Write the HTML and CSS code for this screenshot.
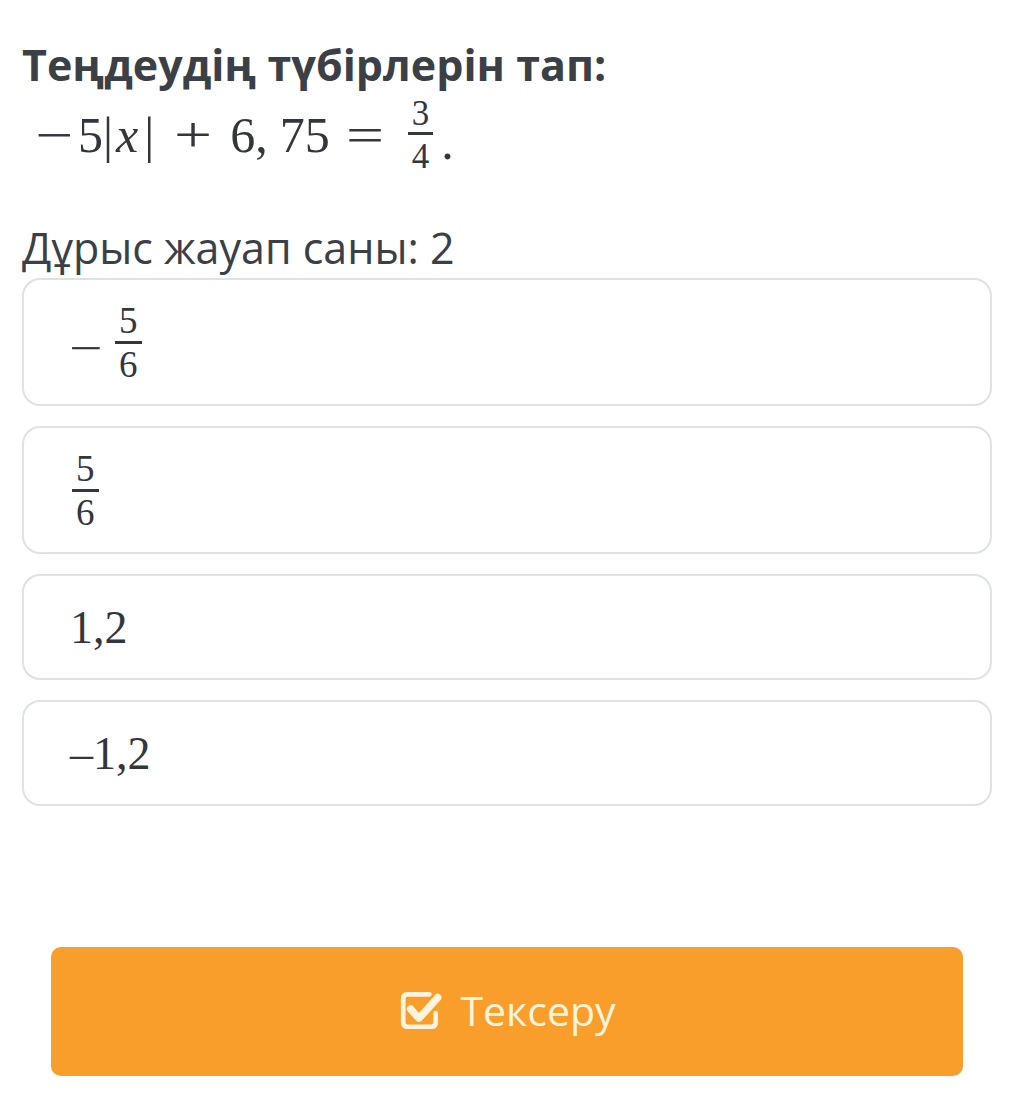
FILE: index.html
```html
<!DOCTYPE html>
<html lang="kk">
<head>
<meta charset="utf-8">
<link rel="stylesheet" href="styles.css">
</head>
<body>
<div class="page">
  <h1 class="title">Теңдеудің түбірлерін тап:</h1>
  <div class="math eq">
    <span class="op lead">−</span><span class="d5">5</span><span class="bar">|</span><span class="var">x</span><span class="bar bar2">|</span><span class="op bin">+</span><span class="d6">6</span><span class="comma">,</span><span class="d75">75</span><span class="op rel">=</span><span class="frac big"><span class="num">3</span><span class="den">4</span></span><span class="dot">.</span>
  </div>
  <div class="count">Дұрыс жауап саны: 2</div>
  <div class="options">
    <div class="option tall">
      <div class="math"><span class="op neg">−</span><span class="frac opt"><span class="num">5</span><span class="den">6</span></span></div>
    </div>
    <div class="option tall">
      <div class="math"><span class="frac opt solo"><span class="num">5</span><span class="den">6</span></span></div>
    </div>
    <div class="option">
      <div class="math plain">1,2</div>
    </div>
    <div class="option">
      <div class="math plain">–1,2</div>
    </div>
  </div>
  <button class="check">
    <svg class="icon" width="44" height="44" viewBox="0 0 42 42" fill="none">
      <path d="M30 6 H9 Q5 6 5 10 V33 Q5 37 9 37 H32 Q36 37 36 33 V24" stroke="currentColor" stroke-width="4.5" stroke-linecap="round"/>
      <path d="M12 20 L20 29 L38 9" stroke="currentColor" stroke-width="7" stroke-linecap="round" stroke-linejoin="round"/>
    </svg>
    <span>Тексеру</span>
  </button>
</div>
</body>
</html>
```

FILE: styles.css
```css
* { box-sizing: border-box; }
html, body { margin: 0; padding: 0; background: #ffffff; }
body { font-family: "Open Sans", "Noto Sans", sans-serif; color: #3b4047; }
.page { padding: 36px 38px 0 22px; width: 1030px; }
.title { margin: 0; font-size: 43px; font-weight: 700; line-height: 58px; }
.math { font-family: "Liberation Serif", "DejaVu Serif", serif; display: flex; align-items: center; color: #33373d; }
.eq { font-size: 50px; height: 82px; padding-left: 16px; }
.op { display: inline-block; text-align: center; transform: scaleX(1.35); }
.eq .lead { width: 32px; }
.eq .d5 { margin-left: 8px; }
.eq .bar { font-weight: 300; }
.eq .var { font-style: italic; margin-left: 3px; }
.eq .bar2 { margin-left: 6px; }
.eq .bin { width: 34px; margin-left: 22px; }
.eq .d6 { margin-left: 20px; }
.eq .d75 { margin-left: 12px; }
.eq .rel { width: 46px; margin-left: 12px; }
.eq .frac { margin-left: 20px; }
.eq .dot { margin-left: 8px; padding-top: 14px; }
.frac { display: inline-flex; flex-direction: column; align-items: center; font-size: 32px; line-height: 1; }
.frac .num { padding: 0 4px 1px; border-bottom: 2.5px solid #33373d; }
.frac .den { padding-top: 4px; }
.frac.big { font-size: 35px; }
.frac.big .num { border-bottom-width: 3px; }
.frac.opt { font-size: 37px; }
.frac.opt .num { padding: 0 4px 2px; border-bottom-width: 3px; }
.frac.opt .den { padding-top: 2px; }
.frac.solo { margin-left: 2px; }
.count { font-size: 43px; line-height: 56px; margin-top: 44px; }
.options { display: flex; flex-direction: column; gap: 20px; margin-top: 2px; }
.option { border: 2px solid #dee2e4; border-radius: 18px; height: 106px; display: flex; align-items: center; padding-left: 46px; }
.option.tall { height: 128px; align-items: flex-start; padding-top: 22px; }
.option .neg { width: 32px; font-size: 44px; margin-right: 13px; margin-top: 12px; }
.plain { font-size: 46px; }
.check { display: flex; align-items: center; justify-content: center; gap: 18px; width: 912px; height: 129px; margin: 141px 0 0 29px; border: none; border-radius: 10px; background: #f99d2b; color: #fdf4de; font-family: "Open Sans", "Noto Sans", sans-serif; font-size: 41px; padding: 0 0 4px 0; }
.icon { display: block; }
```
